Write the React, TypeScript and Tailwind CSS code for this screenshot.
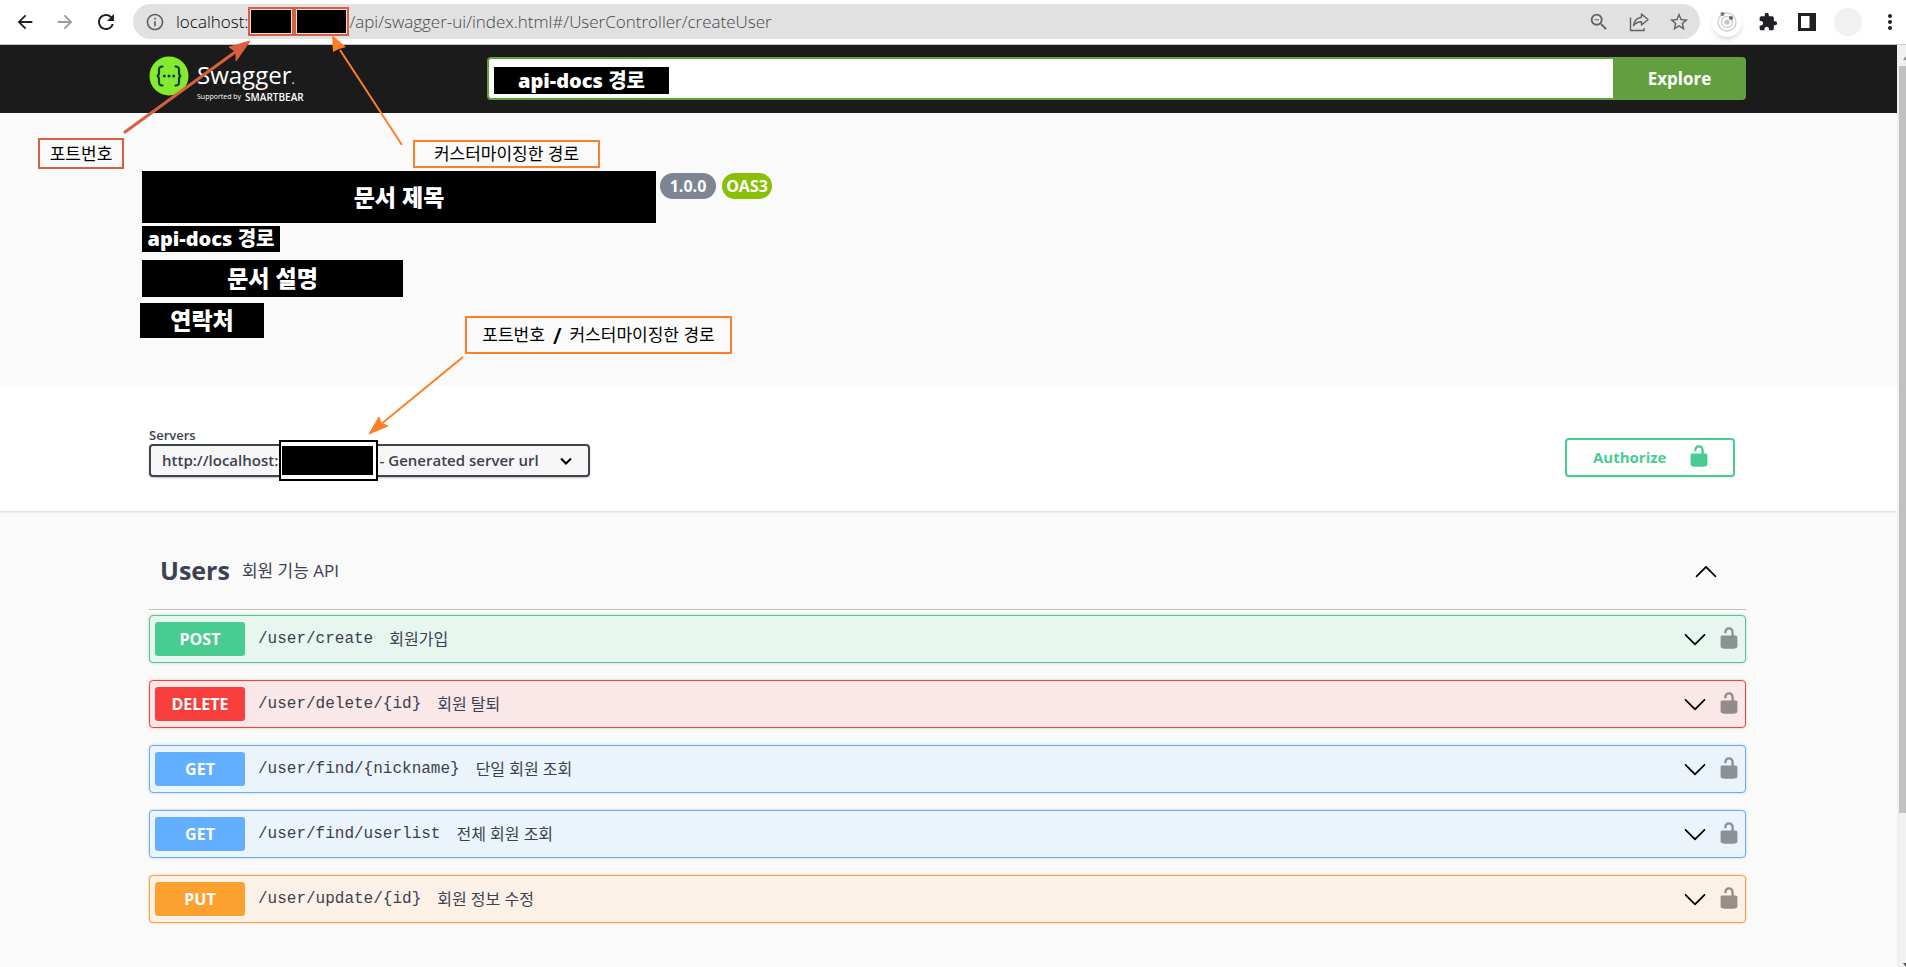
import type { ReactNode } from 'react'
import {
  MdArrowBack,
  MdArrowForward,
  MdExtension,
  MdInfoOutline,
  MdMoreVert,
  MdRefresh,
  MdStarBorder,
  MdZoomOut,
} from 'react-icons/md'

const operations = [
  { method: 'POST', path: '/user/create', summary: '회원가입', row: 'border-[#49cc90] bg-[#e8f6f0]', badge: 'bg-[#49cc90]' },
  { method: 'DELETE', path: '/user/delete/{id}', summary: '회원 탈퇴', row: 'border-[#f93e3e] bg-[#fae7e7]', badge: 'bg-[#f93e3e]' },
  { method: 'GET', path: '/user/find/{nickname}', summary: '단일 회원 조회', row: 'border-[#61affe] bg-[#ebf3fb]', badge: 'bg-[#61affe]' },
  { method: 'GET', path: '/user/find/userlist', summary: '전체 회원 조회', row: 'border-[#61affe] bg-[#ebf3fb]', badge: 'bg-[#61affe]' },
  { method: 'PUT', path: '/user/update/{id}', summary: '회원 정보 수정', row: 'border-[#fca130] bg-[#fbf1e6]', badge: 'bg-[#fca130]' },
]

function UnlockedIcon({ className }: { className?: string }) {
  return (
    <svg viewBox="0 0 20 20" className={className} fill="currentColor" aria-hidden="true">
      <path d="M15.8 8H14V5.6C14 2.703 12.665 1 10 1 7.334 1 6 2.703 6 5.6V6h2v-.801C8 3.754 8.797 3 10 3c1.203 0 2 .754 2 2.199V8H4c-.553 0-1 .646-1 1.199V17c0 .549.428 1.139.951 1.307l1.197.387C5.672 18.861 6.55 19 7.1 19h5.8c.549 0 1.428-.139 1.951-.307l1.196-.387c.524-.167.953-.757.953-1.306V9.199C17 8.646 16.352 8 15.8 8z" />
    </svg>
  )
}

function ArrowIcon({ up = false }: { up?: boolean }) {
  return (
    <svg viewBox="0 0 20 20" className="h-6 w-6 shrink-0 text-black" fill="currentColor" aria-hidden="true">
      {up ? (
        <path d="M17.418 14.908c.272.268.709.268.979 0s.271-.701 0-.969l-7.908-7.83c-.27-.268-.707-.268-.979 0l-7.908 7.83c-.27.268-.27.701 0 .969.271.268.709.268.979 0L10 7.767l7.418 7.141z" />
      ) : (
        <path d="M17.418 6.109c.272-.268.709-.268.979 0s.271.701 0 .969l-7.908 7.83c-.27.268-.707.268-.979 0l-7.908-7.83c-.27-.268-.27-.701 0-.969.271-.268.709-.268.979 0L10 13.25l7.418-7.141z" />
      )}
    </svg>
  )
}

/* Black block that hides a private value and names what is behind it */
function Masked({ className = '', children }: { className?: string; children?: ReactNode }) {
  return (
    <div className={`flex items-center justify-center bg-black font-black whitespace-nowrap text-white ${className}`}>
      {children}
    </div>
  )
}

function BrowserBar() {
  return (
    <div className="flex h-[45px] items-center border-b border-[#c8c8c8] bg-white pr-1 pb-px text-[#202124]">
      <div className="flex w-[133px] shrink-0 items-center gap-[18px] pl-[14px]">
        <button aria-label="Back"><MdArrowBack className="h-[22px] w-[22px]" /></button>
        <button aria-label="Forward" className="text-[#9a9c9e]"><MdArrowForward className="h-[22px] w-[22px]" /></button>
        <button aria-label="Reload"><MdRefresh className="h-6 w-6" /></button>
      </div>
      <div className="flex h-[35px] flex-1 items-center rounded-full bg-[#e1e1e1] pr-[10px] pl-3">
        <MdInfoOutline className="mr-2 h-[20px] w-[20px] text-[#5f6368]" />
        <div className="flex flex-1 items-center pl-[3px] text-[17px] font-light text-[#45484c]">
          <span className="text-black">localhost:</span>
          <Masked className="h-[29px] w-[46px] border-2 border-[#d8603f] ring-1 ring-[#ecdcd6] ring-inset" />
          <Masked className="h-[29px] w-[55px] border-2 border-[#d8603f] ring-1 ring-[#ecdcd6] ring-inset" />
          <span>/api/swagger-ui/index.html#/UserController/createUser</span>
        </div>
        <div className="flex items-center gap-[18px] text-[#5f6368]">
          <button aria-label="Zoom"><MdZoomOut className="h-[22px] w-[22px]" /></button>
          <button aria-label="Share">
            <svg viewBox="0 0 22 22" className="h-[22px] w-[22px]" fill="none" stroke="currentColor" strokeWidth="1.4">
              <path d="M2.500 6.500v13H16V17" />
              <path d="M13.500 3 20 8.500 13.500 14v-3.300c-3.500 0-6 1.100-8 4 .6-4.500 3.300-7.700 8-8.400z" strokeLinejoin="round" />
            </svg>
          </button>
          <button aria-label="Bookmark"><MdStarBorder className="h-[22px] w-[22px]" /></button>
        </div>
      </div>
      <div className="flex items-center gap-4 pl-3">
        <button aria-label="Extension" className="rounded-full bg-white shadow-md">
          <svg viewBox="0 0 30 30" className="h-[30px] w-[30px]" fill="none" stroke="#cfcfcf" strokeWidth="1.4">
            <circle cx="15" cy="15" r="9" />
            <circle cx="15" cy="15" r="5.500" />
            <circle cx="15" cy="15" r="2.600" fill="#c4c4c4" stroke="none" />
            <circle cx="10.500" cy="7" r="2" fill="#777" stroke="none" />
            <circle cx="19" cy="11" r="2" fill="#666" stroke="none" />
          </svg>
        </button>
        <button aria-label="Extensions"><MdExtension className="h-5 w-5" /></button>
        <button aria-label="Side panel" className="ml-1">
          <svg viewBox="0 0 18 18" className="h-[18px] w-[18px]">
            <path fill="currentColor" fillRule="evenodd" d="M0 0h18v18H0zM3 3v12h8.500V3z" />
          </svg>
        </button>
        <button aria-label="Profile" className="ml-[2px] h-7 w-7 rounded-full bg-[#f1f1f1]" />
        <button aria-label="Menu"><MdMoreVert className="h-6 w-6" /></button>
      </div>
    </div>
  )
}

function Topbar() {
  return (
    <header className="flex h-[68px] items-start bg-[#1b1b1b] pt-[11px] pr-[151px] pl-[149px]">
      <a href="#" className="flex w-[338px] shrink-0 items-start gap-2 text-white">
        <svg viewBox="0 0 40 40" className="h-10 w-10" aria-hidden="true">
          <circle cx="20" cy="20" r="19.500" fill="#85ea2d" />
          <g fill="none" stroke="#173647" strokeWidth="2.200" strokeLinecap="round">
            <path d="M13.500 10.500c-3 0-3.500 1-3.500 3.500v3c0 1.800-.6 2.800-2.200 3 1.600.2 2.200 1.200 2.200 3v3c0 2.500.5 3.500 3.500 3.500" />
            <path d="M26.500 10.500c3 0 3.500 1 3.500 3.500v3c0 1.800.6 2.800 2.200 3-1.600.2-2.200 1.200-2.200 3v3c0 2.500-.5 3.500-3.500 3.500" />
          </g>
          <g fill="#173647">
            <circle cx="15.300" cy="20" r="1.500" />
            <circle cx="20" cy="20" r="1.500" />
            <circle cx="24.700" cy="20" r="1.500" />
          </g>
        </svg>
        <span className="flex flex-col pt-[2px]">
          <span className="text-[24px] leading-[33px]">Swagger<span className="text-xs">.</span></span>
          <span className="flex items-center gap-1 leading-3">
            <span className="text-[7px]">Supported by</span>
            <span className="text-[10px] font-semibold">SMARTBEAR</span>
          </span>
        </span>
      </a>
      <form className="mt-px flex h-[43px] flex-1" onSubmit={(e) => e.preventDefault()}>
        <div className="relative flex-1">
          <input
            type="text"
            aria-label="api-docs 경로"
            className="h-full w-full rounded-l border-2 border-r-0 border-[#62a03f] bg-white px-2 outline-none"
          />
          <Masked className="absolute top-[10px] left-[7px] h-[27px] w-[175px] text-[20px]">api-docs 경로</Masked>
        </div>
        <button className="w-[133px] rounded-r bg-[#62a03f] text-[17px] font-bold text-white">Explore</button>
      </form>
    </header>
  )
}

function Info() {
  return (
    <section className="h-[273px] pt-[58px] pl-[142px]">
      <div className="flex items-start">
        <Masked className="h-[52px] w-[514px] text-[23px]">문서 제목</Masked>
        <span className="mt-[2px] ml-1 flex h-[26px] w-14 items-center justify-center rounded-full bg-[#7d8492] text-[16px] font-bold text-white">1.0.0</span>
        <span className="mt-[2px] ml-[6px] flex h-[26px] w-[50px] items-center justify-center rounded-full bg-[#89bf04] text-[16px] font-bold text-white">OAS3</span>
      </div>
      <Masked className="mt-[3px] h-[26px] w-[138px] text-[20px]">api-docs 경로</Masked>
      <Masked className="mt-2 h-[37px] w-[261px] text-[23px]">문서 설명</Masked>
      <Masked className="mt-[6px] -ml-[2px] h-[35px] w-[124px] text-[23px]">연락처</Masked>
    </section>
  )
}

function Servers() {
  return (
    <section className="flex h-[125px] items-start justify-between bg-white pt-[41px] pr-[162px] pl-[149px] shadow-[0_1px_2px_0_rgba(0,0,0,0.15)]">
      <div className="flex flex-col">
        <label htmlFor="servers" className="text-[13px] leading-[17px] font-semibold">Servers</label>
        <div className="relative w-[441px]">
          <select
            id="servers"
            className="h-[33px] w-full appearance-none rounded border-2 border-[#41444e] bg-[#f7f7f7] pl-[11px] text-[15px] font-semibold shadow-[0_1px_2px_0_rgba(0,0,0,0.25)]"
          >
            <option>{'http://localhost:' + '\u00a0'.repeat(26) + '- Generated server url'}</option>
          </select>
          <svg viewBox="0 0 12 8" className="pointer-events-none absolute top-[13px] right-[18px] h-2 w-3" fill="none" stroke="#000" strokeWidth="2">
            <path d="M1 1.500l5 5 5-5" />
          </svg>
          <div className="pointer-events-none absolute -top-1 left-[130px] border-2 border-black bg-white py-1 pr-[3px] pl-px">
            <Masked className="h-[29px] w-[91px]" />
          </div>
        </div>
      </div>
      <button className="mt-[11px] flex h-[39px] w-[170px] items-center justify-between rounded border-2 border-[#49cc90] pr-[22px] pl-[26px] text-[15px] font-bold text-[#49cc90] shadow-[0_1px_2px_rgba(0,0,0,0.1)]">
        Authorize
        <UnlockedIcon className="mb-1 h-6 w-6" />
      </button>
    </section>
  )
}

function Operations() {
  return (
    <section className="flex-1 pr-[151px] pl-[149px]">
      <h3 className="mt-[25px] mb-[5px] flex h-[74px] items-center border-b border-[#bfc0c2] pr-7 pb-[3px] pl-[11px]">
        <span className="text-[25px] font-bold">Users</span>
        <span className="flex-1 pl-3 text-[17px]">회원 기능 API</span>
        <button aria-label="Collapse Users"><ArrowIcon up /></button>
      </h3>
      <div className="flex flex-col gap-[17px]">
        {operations.map((op) => (
          <div
            key={op.path}
            className={`flex h-12 items-center rounded border pr-1 pb-px pl-[5px] shadow-[0_0_3px_rgba(0,0,0,0.19)] ${op.row}`}
          >
            <button className="flex flex-1 items-center text-left">
              <span className={`flex h-[34px] w-[90px] items-center justify-center rounded-[3px] text-[16px] font-bold text-white ${op.badge}`}>
                {op.method}
              </span>
              <span className="pl-[13px] font-['Liberation_Mono',monospace] text-[16px]">{op.path}</span>
              <span className="flex-1 pl-4 text-[16px]">{op.summary}</span>
              <ArrowIcon />
            </button>
            <button aria-label={`Authorization ${op.path}`} className="mb-[2px] ml-[10px]">
              <UnlockedIcon className="h-6 w-6 text-black opacity-40" />
            </button>
          </div>
        ))}
      </div>
    </section>
  )
}

/* Boxed notes and the arrows that point from them into the page */
function Notes() {
  return (
    <div className="pointer-events-none absolute inset-0 text-[17px] text-black">
      <svg width="760" height="450" viewBox="0 0 760 450" className="absolute top-0 left-0">
        <path d="M125 132 238 50" stroke="#d8603f" strokeWidth="3" strokeLinecap="round" />
        <path d="M250 41 229 47l7 5 0 9z" fill="#d8603f" stroke="#d8603f" />
        <path d="M402 145 340 50" stroke="#ff7f27" strokeWidth="2" />
        <path d="M332 35l1 17 6-3 7-2z" fill="#ff7f27" />
        <path d="M463 357 380 425" stroke="#ff7f27" strokeWidth="2" />
        <path d="M369 434l10-17 2 6 7 3z" fill="#ff7f27" stroke="#ff7f27" />
      </svg>
      <div className="absolute top-[138px] left-[38px] flex h-[31px] w-[86px] items-center justify-center border-2 border-[#d8603f]">포트번호</div>
      <div className="absolute top-[140px] left-[413px] flex h-7 w-[187px] items-center justify-center border-2 border-[#ff7f27]">커스터마이징한 경로</div>
      <div className="absolute top-[316px] left-[465px] flex h-[38px] w-[267px] items-center justify-center gap-2 border-2 border-[#ff7f27]">
        <span>포트번호</span>
        <span className="text-[22px] font-semibold">/</span>
        <span>커스터마이징한 경로</span>
      </div>
    </div>
  )
}

function Scrollbar() {
  return (
    <div className="flex w-[9px] shrink-0 flex-col items-end overflow-hidden bg-[#f1f1f1]">
      <div className="flex h-[21px] w-[7px] items-center justify-end">
        <svg viewBox="0 0 3 4" className="mt-1 h-1 w-[3px]"><path d="M0 4 3 0v4z" fill="#8b8b8b" /></svg>
      </div>
      <div className="h-[81%] w-[7px] bg-[#c1c1c1]" />
      <svg viewBox="0 0 3 4" className="mt-auto h-1 w-[3px]"><path d="M0 0h3v4z" fill="#505050" /></svg>
    </div>
  )
}

export default function App() {
  return (
    <div className="relative flex min-h-screen flex-col bg-[#fafafa] font-['Open_Sans','Noto_Sans_CJK_KR',sans-serif] text-[#3b4151]">
      <BrowserBar />
      <div className="flex flex-1">
        <main className="flex flex-1 flex-col">
          <Topbar />
          <Info />
          <Servers />
          <Operations />
        </main>
        <Scrollbar />
      </div>
      <Notes />
    </div>
  )
}
